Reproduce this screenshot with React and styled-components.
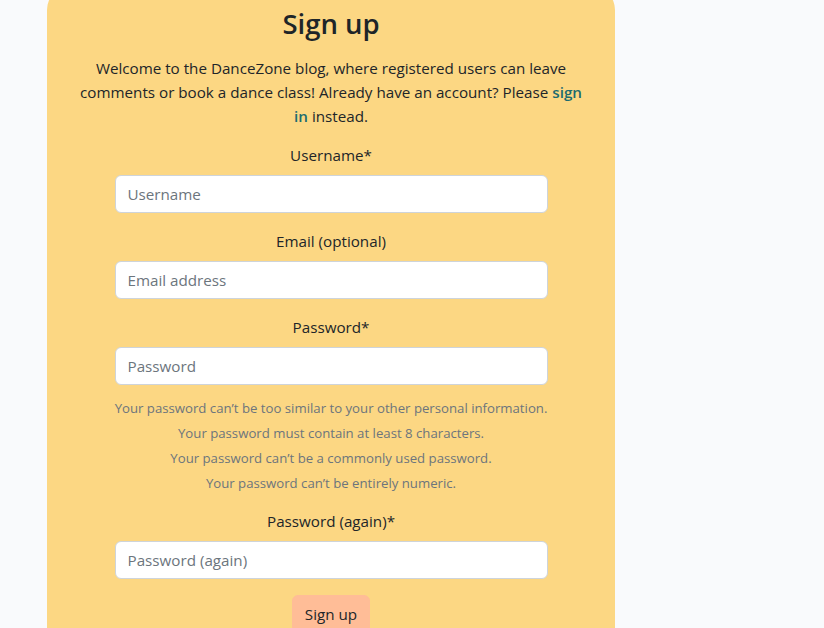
import React from "react";
import styled, { createGlobalStyle } from "styled-components";

const GlobalStyle = createGlobalStyle`
  html, body {
    margin: 0;
    padding: 0;
    background: #f9fafc;
    overflow: hidden;
  }
  body {
    font-family: "Open Sans", "Noto Sans", sans-serif;
    font-size: 15.2px;
    color: #212529;
  }
  * { box-sizing: border-box; }
`;

const Page = styled.main`
  width: 824px;
  height: 628px;
  padding-left: 47px;
  overflow: hidden;
`;

const Card = styled.section`
  width: 568px;
  margin-top: -14px;
  padding: 19px 32px 40px;
  background: #fcd783;
  border-radius: 24px;
  text-align: center;
`;

const Title = styled.h2`
  margin: 0 0 13px;
  font-size: 27.5px;
  font-weight: 600;
  line-height: 38px;
  color: #1e2528;
`;

const Intro = styled.p`
  margin: 0 0 15px;
  line-height: 24px;
  color: #212529;
`;

const Link = styled.a`
  color: #1d6b6f;
  font-weight: 600;
  text-decoration: none;
`;

const Form = styled.form`
  width: 433px;
  margin: 0 auto;
  display: flex;
  flex-direction: column;
  align-items: stretch;
`;

const Field = styled.div`
  display: flex;
  flex-direction: column;
  margin-bottom: ${p => p.$mb ?? 16}px;
`;

const Label = styled.label`
  display: block;
  line-height: 24px;
  margin-bottom: 8px;
  color: #212529;
`;

const Input = styled.input`
  display: block;
  width: 100%;
  height: 38px;
  padding: 6px 12px;
  font-family: inherit;
  font-size: 15.2px;
  line-height: 24px;
  color: #212529;
  background: #fff;
  border: 1px solid #ced4da;
  border-radius: 6px;
  outline: none;
  &::placeholder {
    color: #6c757d;
    opacity: 1;
  }
`;

const HelpList = styled.ul`
  list-style: none;
  margin: 11px -20px 0;
  padding: 0;
  font-size: 13.2px;
  line-height: 25px;
  color: #6c757d;
  white-space: nowrap;
`;

const Button = styled.button`
  align-self: center;
  padding: 6px 12px;
  font-family: inherit;
  font-size: 15.2px;
  line-height: 24px;
  color: #212529;
  background: #ffbd97;
  border: 1px solid #ffbd97;
  border-radius: 6px;
  cursor: pointer;
`;

const helps = [
  "Your password can’t be too similar to your other personal information.",
  "Your password must contain at least 8 characters.",
  "Your password can’t be a commonly used password.",
  "Your password can’t be entirely numeric.",
];

export default function App() {
  return (
    <>
      <GlobalStyle />
      <Page>
        <Card>
          <Title>Sign up</Title>
          <Intro>
            Welcome to the DanceZone blog, where registered users can leave
            comments or book a dance class! Already have an account? Please{" "}
            <Link href="#">sign in</Link> instead.
          </Intro>
          <Form onSubmit={e => e.preventDefault()}>
            <Field>
              <Label htmlFor="username">Username*</Label>
              <Input id="username" placeholder="Username" />
            </Field>
            <Field>
              <Label htmlFor="email">Email (optional)</Label>
              <Input id="email" placeholder="Email address" />
            </Field>
            <Field $mb={13}>
              <Label htmlFor="password1">Password*</Label>
              <Input id="password1" type="password" placeholder="Password" />
              <HelpList>
                {helps.map(h => (
                  <li key={h}>{h}</li>
                ))}
              </HelpList>
            </Field>
            <Field>
              <Label htmlFor="password2">Password (again)*</Label>
              <Input id="password2" type="password" placeholder="Password (again)" />
            </Field>
            <Button type="submit">Sign up</Button>
          </Form>
        </Card>
      </Page>
    </>
  );
}
